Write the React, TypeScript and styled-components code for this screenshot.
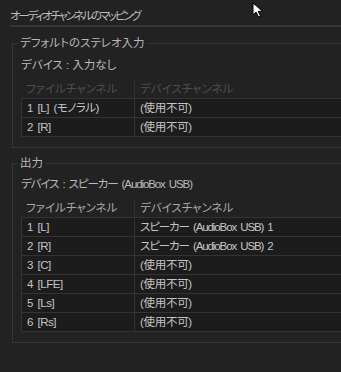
import React from "react";
import styled, { createGlobalStyle } from "styled-components";

const GlobalStyle = createGlobalStyle`
  html, body {
    margin: 0;
    padding: 0;
    background: #222222;
    overflow: hidden;
  }
  body {
    font-family: "Liberation Sans", "Noto Sans CJK JP", sans-serif;
    font-size: 11.5px;
    font-feature-settings: "palt" 1;
    color: #b4b4b4;
  }
`;

const Page = styled.div`
  position: relative;
  width: 400px;
  height: 372px;
`;

/* header with the thick rule under it */
const Title = styled.div`
  margin: 7px 0 0 10px;
  height: 18px;
  line-height: 18px;
  letter-spacing: -2.2px;
  color: #bdbdbd;
  border-bottom: 2px solid #353535;
`;

const Group = styled.fieldset<{ $top: number }>`
  margin: ${(p) => p.$top}px 0 0 12px;
  padding: 0 0 10px 8px;
  border: 1px solid #363636;
  border-right: none;
  min-width: 0;
`;

const Legend = styled.legend`
  margin-left: -3px;
  padding: 0 2px;
  line-height: 16px;
  color: #b8b8b8;
`;

const Device = styled.div<{ $gap: number; $tight?: boolean }>`
  margin-top: ${(p) => p.$gap}px;
  line-height: 18px;
  color: #bababa;
  letter-spacing: ${(p) => (p.$tight ? "-1.1px" : "0")};
  word-spacing: ${(p) => (p.$tight ? "2px" : "0")};
`;

const Table = styled.div`
  margin-top: 6px;
`;

const HeaderRow = styled.div<{ $dim?: boolean }>`
  display: grid;
  grid-template-columns: 114px 1fr;
  height: 18px;
  line-height: 18px;
  color: ${(p) => (p.$dim ? "#4e4e4e" : "#aaaaaa")};
`;

const HeaderCell = styled.div<{ $sep?: boolean }>`
  padding-left: 5px;
  border-right: ${(p) => (p.$sep ? "1px solid #2f2f2f" : "none")};
  white-space: nowrap;
`;

const Body = styled.div`
  border-top: 1px solid #333333;
  border-left: 1px solid #333333;
  background: #1c1c1c;
`;

const Row = styled.div`
  display: grid;
  grid-template-columns: 113px 1fr;
  height: 18px;
  line-height: 18px;
  border-bottom: 1px solid #333333;
`;

const Cell = styled.div<{ $sep?: boolean; $tight?: boolean }>`
  padding-left: 5px;
  color: #c4c4c4;
  white-space: nowrap;
  letter-spacing: ${(p) => (p.$tight ? "-1.1px" : p.$sep ? "-0.5px" : "-0.3px")};
  word-spacing: ${(p) => (p.$tight || p.$sep ? "2px" : "0")};
  border-right: ${(p) => (p.$sep ? "1px solid #333333" : "none")};
`;

const Cursor = styled.svg`
  position: absolute;
  left: 252px;
  top: -5px;
`;

const inputRows = [
  ["1 [L] (モノラル)", "(使用不可)"],
  ["2 [R]", "(使用不可)"],
];

const outputRows = [
  ["1 [L]", "スピーカー (AudioBox USB) 1"],
  ["2 [R]", "スピーカー (AudioBox USB) 2"],
  ["3 [C]", "(使用不可)"],
  ["4 [LFE]", "(使用不可)"],
  ["5 [Ls]", "(使用不可)"],
  ["6 [Rs]", "(使用不可)"],
];

const MapTable: React.FC<{ rows: string[][]; dim?: boolean }> = ({ rows, dim }) => (
  <Table>
    <HeaderRow $dim={dim}>
      <HeaderCell $sep>ファイルチャンネル</HeaderCell>
      <HeaderCell>デバイスチャンネル</HeaderCell>
    </HeaderRow>
    <Body>
      {rows.map(([a, b]) => (
        <Row key={a}>
          <Cell $sep>{a}</Cell>
          <Cell $tight={b.startsWith("スピーカー")}>{b}</Cell>
        </Row>
      ))}
    </Body>
  </Table>
);

export default function App() {
  return (
    <Page>
      <GlobalStyle />
      <Title>オーディオチャンネルのマッピング</Title>
      <Group $top={8}>
        <Legend>デフォルトのステレオ入力</Legend>
        <Device $gap={5}>デバイス : 入力なし</Device>
        <MapTable rows={inputRows} dim />
      </Group>
      <Group $top={7}>
        <Legend>出力</Legend>
        <Device $gap={4} $tight>デバイス : スピーカー (AudioBox USB)</Device>
        <MapTable rows={outputRows} />
      </Group>
      <Cursor width="16" height="16" viewBox="0 0 16 16">
        <path d="M1 1 L1 13 L4 10 L6.5 15 L8.5 14 L6.2 9.3 L10.5 9.3 Z" fill="#ffffff" stroke="#000000" strokeWidth="1" />
      </Cursor>
    </Page>
  );
}
